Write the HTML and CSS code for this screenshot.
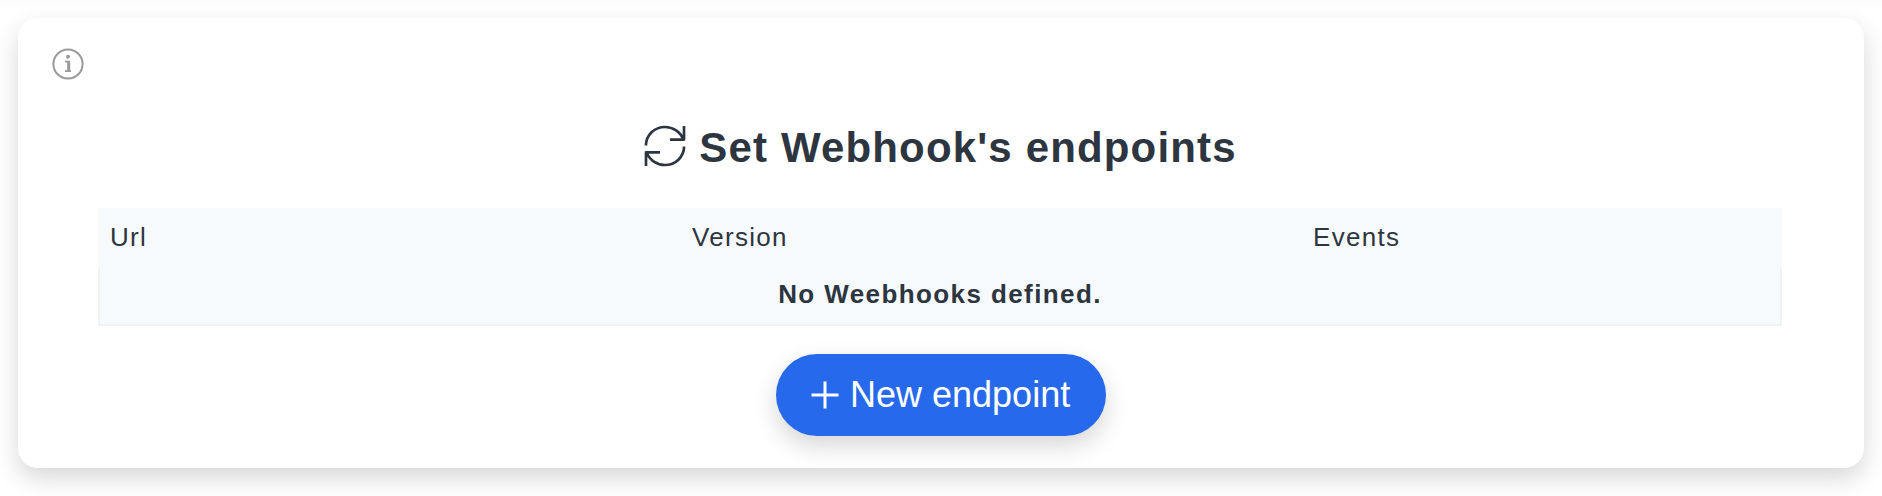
FILE: index.html
```html
<!DOCTYPE html>
<html lang="en">
<head>
<meta charset="utf-8">
<title>Webhooks</title>
<link rel="stylesheet" href="styles.css">
</head>
<body>
<section class="card">
  <svg class="info" viewBox="0 0 32 32" aria-hidden="true">
    <circle cx="16" cy="16" r="14.6" fill="none" stroke="currentColor" stroke-width="2"/>
    <circle cx="16" cy="8.8" r="2" fill="currentColor"/>
    <path d="M13 12.7h5.2v9.5H19V24h-6v-1.8h2.2v-7.7H13z" fill="currentColor"/>
  </svg>
  <h1 class="title">
    <svg class="sync" viewBox="0 0 42 42" fill="none" stroke="currentColor" stroke-width="2.7" aria-hidden="true">
      <path d="M1.9 20.5C2.1 10 10.4 2 21 2c8 0 15.6 5 18.2 12.4M26 14.6h14V1" stroke-linejoin="round"/>
      <path d="M40.1 21.5C39.9 32 31.6 40 21 40c-8 0-15.6-5-18.2-12.4M16 27.4H2V41" stroke-linejoin="round"/>
    </svg>
    <span>Set Webhook's endpoints</span>
  </h1>
  <table class="endpoints">
    <thead>
      <tr><th class="col-url">Url</th><th class="col-version">Version</th><th>Events</th></tr>
    </thead>
    <tbody>
      <tr><td class="empty" colspan="3">No Weebhooks defined.</td></tr>
    </tbody>
  </table>
  <button class="add" type="button">
    <svg class="plus" viewBox="0 0 28 28" aria-hidden="true"><path d="M14 .5v27M.5 14h27" stroke="currentColor" stroke-width="3"/></svg>
    <span>New endpoint</span>
  </button>
</section>
</body>
</html>
```
FILE: styles.css
```css
* { box-sizing: border-box; }

body {
  margin: 0;
  padding: 18px;
  height: 496px;
  overflow: hidden;
  background: #fff linear-gradient(#fafafa, #fff) 0 0 / 100% 8px no-repeat;
  color: #2d3540;
  font-family: "Liberation Sans", Arial, sans-serif;
}

.card {
  display: flex;
  flex-direction: column;
  align-items: center;
  height: 450px;
  padding: 30px 82px 0 80px;
  border-radius: 20px;
  background: #fff;
  box-shadow: 0 10px 25px rgba(0, 0, 0, .16);
}

.info {
  align-self: flex-start;
  width: 32px;
  height: 32px;
  margin-left: -46px;
  color: #999;
}

.title {
  display: flex;
  align-items: center;
  gap: 13px;
  height: 48px;
  margin: 44px 0 36px 1px;
  font-size: 42px;
  line-height: 48px;
  letter-spacing: 1.15px;
  white-space: nowrap;
}

.sync {
  width: 42px;
  height: 42px;
  margin-bottom: 4px;
}

.endpoints {
  width: 1684px;
  flex: none;
  border-spacing: 0;
  table-layout: fixed;
  background: #f6fafd;
  font-size: 26px;
  line-height: 30px;
}

.endpoints th {
  height: 60px;
  padding: 0 12px 3px;
  font-weight: 400;
  text-align: left;
  letter-spacing: 1.3px;
}

.col-url { width: 582px; }
.col-version { width: 621px; }

.endpoints .empty {
  height: 58px;
  padding: 0 0 4px;
  border: solid #f2f2f2;
  border-width: 0 2px 2px;
  font-weight: 700;
  text-align: center;
  letter-spacing: 1.4px;
}

.add {
  display: flex;
  align-items: center;
  gap: 11px;
  width: 330px;
  height: 82px;
  margin: 28px 0 0 2px;
  padding: 0 0 1px 35px;
  border: 0;
  border-radius: 41px;
  background: #266aeb;
  box-shadow: 0 10px 25px rgba(0, 0, 0, .16);
  color: #fff;
  font: 36px/42px "Liberation Sans", Arial, sans-serif;
  white-space: nowrap;
}

.plus {
  width: 28px;
  height: 28px;
}
```
